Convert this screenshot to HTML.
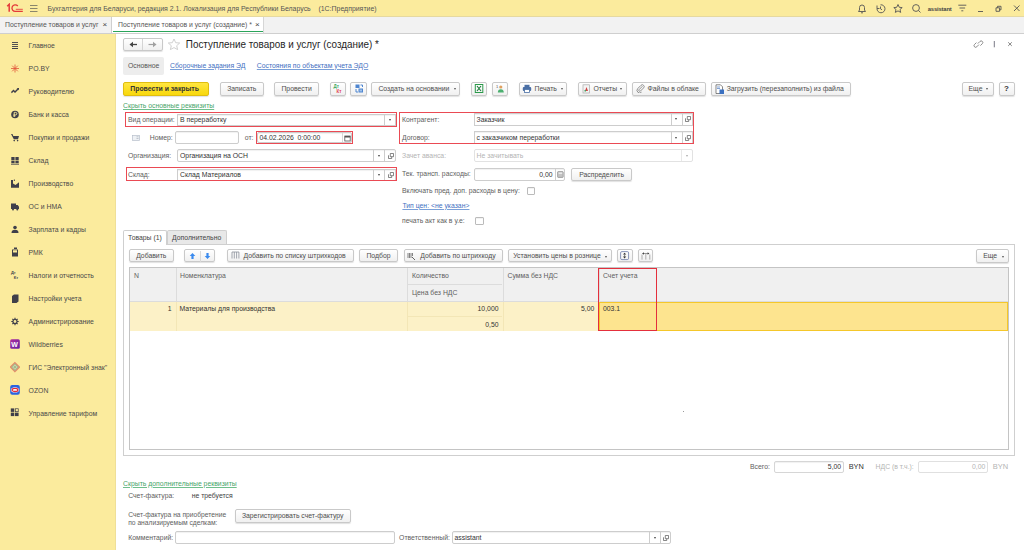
<!DOCTYPE html>
<html><head><meta charset="utf-8">
<style>
*{margin:0;padding:0;box-sizing:border-box}
html,body{width:1024px;height:550px;overflow:hidden;background:#fff}
body{font-family:"Liberation Sans",sans-serif;font-size:6.85px;color:#5e5e5e;position:relative}
.a{position:absolute;white-space:nowrap}
.t{position:absolute;white-space:nowrap;line-height:10px;height:10px}
.btn{position:absolute;border:1px solid #c9c9c9;border-radius:2px;background:linear-gradient(#fff,#f0f0f0);box-shadow:0 1px 1px rgba(0,0,0,.12);text-align:center;line-height:12px;color:#4d4d4d;white-space:nowrap}
.inp{position:absolute;border:1px solid #cdcdcd;border-radius:2px;background:#fff;box-shadow:inset 0 1px 1px rgba(0,0,0,.06)}
.red{position:absolute;border:1.8px solid #ea4a54}
.lnk{color:#3f6fbf;text-decoration:underline;text-decoration-thickness:0.6px;text-decoration-color:#7aa0d8}
.grn{color:#47a56a;text-decoration:underline;text-decoration-thickness:0.6px;text-decoration-color:#6fbf8c}
.dd{position:absolute;top:0;bottom:0;border-left:1px solid #cdcdcd}
.dd:after{content:"";position:absolute;left:3.5px;top:50%;margin-top:-1px;border-left:1.6px solid transparent;border-right:1.6px solid transparent;border-top:2px solid #444}
.lk{position:absolute;top:0;bottom:0;border-left:1px solid #cdcdcd}
.lk svg{position:absolute;left:2.5px;top:50%;margin-top:-3px}
.ddg:after{border-top-color:#aaa!important}
.arr{position:absolute;width:0;height:0;border-left:1.6px solid transparent;border-right:1.6px solid transparent;border-top:2px solid #555}
</style></head><body>

<!-- top bar -->
<div class="a" style="left:0;top:0;width:1024px;height:17px;background:#fbeb9d;border-bottom:1px solid #e6d9a0"></div>
<div class="a" style="left:0;top:17px;width:1024px;height:17px;background:#f2f2f2;border-bottom:1px solid #cfcfcf"></div>
<!-- sidebar -->
<div class="a" style="left:0;top:34px;width:116px;height:516px;background:#fbeb9d;border-right:1px solid #efdf98"></div>
<!-- top bar content -->
<svg class="a" style="left:6px;top:3px" width="19" height="11" viewBox="0 0 19 11">
<path d="M1.2 3.2 L3.2 1.3 V8.7" stroke="#e43a3a" stroke-width="1.5" fill="none"/>
<path d="M11.8 3 A3.3 3.3 0 1 0 9.5 8.4 H16.8" stroke="#e43a3a" stroke-width="1.3" fill="none"/>
<path d="M9.8 6.3 H16.8" stroke="#e8504a" stroke-width="1" fill="none"/>
</svg>
<svg class="a" style="left:30px;top:4px" width="8" height="9" viewBox="0 0 8 9"><path d="M0 1.5H7.5M0 4.5H7.5M0 7.5H7.5" stroke="#7d7a66" stroke-width="0.9"/></svg>
<div class="t" style="left:47.5px;top:3.5px;color:#555;font-size:6.95px">Бухгалтерия для Беларуси, редакция 2.1. Локализация для Республики Беларусь&nbsp;&nbsp;&nbsp; (1С:Предприятие)</div>
<!-- top right icons -->
<svg class="a" style="left:856px;top:3px" width="170" height="11" viewBox="0 0 170 11">
<g fill="none" stroke="#555" stroke-width="0.9">
<path d="M2.5 8.5 H9.5 L8.5 7 V4.5 A2.5 2.5 0 0 0 3.5 4.5 V7 Z M5 9.8 H7"/>
<path d="M21 5.5 A4 4 0 1 0 24.5 1.8 M21 2.5 V5.5 H23.5 M24.5 3.5 V5.8 L26 6.8"/>
<path d="M42 1.5 L43.3 4.3 L46.2 4.6 L44 6.5 L44.7 9.4 L42 7.9 L39.3 9.4 L40 6.5 L37.8 4.6 L40.7 4.3 Z"/>
<circle cx="60" cy="5" r="3.4"/><path d="M62.5 7.5 L64.5 9.5"/>
<path d="M102.3 2.2 H110.3 M103.5 5 H109.1 M105.3 7.8 H107.3" stroke="#555"/>
<path d="M122 8.5 H127"/>
<path d="M140 4.8 H143.6 V8.3 H140 Z M141.5 4.8 V3.3 H145 V6.8 H143.6"/>
<path d="M158 2.5 L163.5 8 M163.5 2.5 L158 8"/>
</g>
</svg>
<div class="t" style="left:927.8px;top:3.5px;color:#444;font-size:5.8px;font-weight:bold;letter-spacing:-0.15px">assistant</div>

<!-- tabs -->
<div class="t" style="left:5px;top:20px;color:#555">Поступление товаров и услуг</div>
<div class="t" style="left:102.5px;top:20px;color:#444;font-size:8px">×</div>
<div class="a" style="left:111px;top:17px;width:1px;height:16px;background:#cfcfcf"></div>
<div class="a" style="left:112px;top:17px;width:151px;height:16px;background:#fff"></div>
<div class="a" style="left:113px;top:30.8px;width:150px;height:1.3px;background:#2aa45a"></div>
<div class="a" style="left:263px;top:17px;width:1px;height:16px;background:#d6d6d6"></div>
<div class="t" style="left:118px;top:20px;color:#555">Поступление товаров и услуг (создание) *</div>
<div class="t" style="left:255px;top:20px;color:#444;font-size:8px">×</div>

<!-- sidebar items -->
<div class="t" style="color:#4a4a4a;left:28.6px;top:40.5px">Главное</div>
<div class="t" style="color:#4a4a4a;left:28.6px;top:63.5px">PO.BY</div>
<div class="t" style="color:#4a4a4a;left:28.6px;top:86.5px">Руководителю</div>
<div class="t" style="color:#4a4a4a;left:28.6px;top:109.5px">Банк и касса</div>
<div class="t" style="color:#4a4a4a;left:28.6px;top:132.5px">Покупки и продажи</div>
<div class="t" style="color:#4a4a4a;left:28.6px;top:155.5px">Склад</div>
<div class="t" style="color:#4a4a4a;left:28.6px;top:178.5px">Производство</div>
<div class="t" style="color:#4a4a4a;left:28.6px;top:201.5px">ОС и НМА</div>
<div class="t" style="color:#4a4a4a;left:28.6px;top:224.5px">Зарплата и кадры</div>
<div class="t" style="color:#4a4a4a;left:28.6px;top:247.5px">РМК</div>
<div class="t" style="color:#4a4a4a;left:28.6px;top:270.5px">Налоги и отчетность</div>
<div class="t" style="color:#4a4a4a;left:28.6px;top:293.5px">Настройки учета</div>
<div class="t" style="color:#4a4a4a;left:28.6px;top:316.5px">Администрирование</div>
<div class="t" style="color:#4a4a4a;left:28.6px;top:339.5px">Wildberries</div>
<div class="t" style="color:#4a4a4a;left:28.6px;top:362.5px">ГИС "Электронный знак"</div>
<div class="t" style="color:#4a4a4a;left:28.6px;top:385.5px">OZON</div>
<div class="t" style="color:#4a4a4a;left:28.6px;top:408.5px">Управление тарифом</div>
<!-- sidebar icons -->
<svg class="a" style="left:10px;top:40px" width="10" height="400" viewBox="0 0 10 400">
<g fill="#3f3f4a">
<!-- Главное y=45.5 -->
<rect x="2" y="2" width="6" height="0.9"/><rect x="2" y="4" width="6" height="0.9"/><rect x="2" y="6" width="6" height="0.9"/><rect x="2" y="8" width="6" height="1"/>
<!-- Руководителю y=91.5 -> 51.5 -->
<path d="M1 52 L3.5 49.5 L5 51 L7.5 48.5 L6.5 48 H9 V50.5 L8.5 49.5 L5 53 L3.5 51.5 L1.8 53.2 Z"/>
<!-- Банк y=114.5 -> 74.5 -->
<circle cx="5" cy="74.5" r="3.8"/>
<!-- Покупки 137.5 -> 97.5 -->
<path d="M1 94 H2.5 L3.3 96 H9 L8 99.2 H3.8 Z"/><circle cx="4.2" cy="100.6" r="0.8"/><circle cx="7.6" cy="100.6" r="0.8"/>
<!-- Склад 160.5 -> 120.5 -->
<rect x="1.3" y="117" width="3.3" height="3"/><rect x="5.4" y="117" width="3.3" height="3"/><rect x="1.3" y="120.6" width="3.3" height="2.6"/><rect x="5.4" y="120.6" width="3.3" height="2.6"/><rect x="1" y="123.8" width="8" height="0.8"/>
<!-- Производство 183.5 -> 143.5 -->
<path d="M1 147.8 V140 H3 V143.5 L5.5 145 L9 142.2 V147.8 Z"/><rect x="3.8" y="139.6" width="1.2" height="1.2"/>
<!-- ОС и НМА 206.5 -> 166.5 -->
<path d="M1 163.5 H6 V165 H7.7 L9 166.8 V169 H1 Z"/><circle cx="3" cy="169.4" r="1"/><circle cx="7.3" cy="169.4" r="1"/>
<!-- Зарплата 229.5 -> 189.5 -->
<circle cx="5" cy="187.5" r="1.8"/><path d="M1.5 193 Q1.5 189.8 5 189.8 Q8.5 189.8 8.5 193 Z"/>
<!-- РМК 252.5 -> 212.5 -->
<path d="M2 209.5 H8 V216.5 H2 Z M3 210.3 V212.5 H7 V210.3 Z" fill-rule="evenodd"/><rect x="4" y="207.5" width="3" height="1.5"/>
<!-- Настройки учета 298.5 -> 258.5 -->
<path d="M2 256 L4 254.5 H8.5 V261.5 L6.5 263 H2 Z"/>
<!-- Админ 321.5 -> 281.5 -->
<circle cx="5" cy="281.5" r="2.6"/>
<!-- Управление тарифом 413.5 -> 373.5 -->
<rect x="0.8" y="368.4" width="3.5" height="3.5"/><rect x="0.8" y="372.6" width="3.5" height="3.5"/><rect x="5" y="372.6" width="3.6" height="3.5"/><rect x="5.35" y="368.75" width="2.9" height="2.9" fill="none" stroke="#3f3f4a" stroke-width="0.7"/>
</g>
<path d="M4.2 77 V72.4 H5.6 A1.25 1.25 0 0 1 5.6 74.9 H3.4 M3.4 75.9 H5.4" fill="none" stroke="#fbeb9d" stroke-width="0.9"/>
<g stroke="#3f3f4a" stroke-width="1.2"><path d="M5 277.8 V285.2 M1.3 281.5 H8.7 M2.4 278.9 L7.6 284.1 M7.6 278.9 L2.4 284.1"/></g>
<circle cx="5" cy="281.5" r="1.4" fill="#fbeb9d"/>
<!-- PO.BY red asterisk 68.5 -> 28.5 -->
<g stroke="#e2553a" stroke-width="0.8"><path d="M5 24.5 V32.5 M1 28.5 H9 M2.2 25.7 L7.8 31.3 M7.8 25.7 L2.2 31.3"/></g>
<!-- Налоги 275.5 -> 235.5 -->
<text x="1" y="234.3" font-size="4" font-weight="bold" font-family="Liberation Sans" fill="#3f3f4a">Дт</text><text x="3.8" y="238.6" font-size="4" font-weight="bold" font-family="Liberation Sans" fill="#3f3f4a">Кт</text>
<!-- Wildberries 344.5 -> 304.5 -->
<defs><linearGradient id="wbg" x1="0" y1="0" x2="1" y2="1"><stop offset="0" stop-color="#b02c9c"/><stop offset="1" stop-color="#5f1fa8"/></linearGradient></defs><rect x="0.2" y="299.2" width="9.6" height="9.5" rx="1.5" fill="url(#wbg)"/><text x="1.2" y="306.8" font-size="7" font-weight="bold" font-family="Liberation Sans" fill="#fff">W</text>
<!-- ГИС 367.5 -> 327.5 -->
<path d="M4.9 321.7 L10.3 327.1 L4.9 332.5 L-0.5 327.1 Z" fill="#e48a6a"/><path d="M4.9 323.2 L8.8 327.1 L4.9 331 L1 327.1 Z" fill="#a9bb8a"/><path d="M4.9 325 L7 327.1 L4.9 329.2 L2.8 327.1 Z" fill="none" stroke="#dfe6c8" stroke-width="0.6"/>
<!-- OZON 390.5 -> 350.5 -->
<rect x="0.2" y="345" width="9.6" height="9.7" rx="2" fill="#2a63e0"/><ellipse cx="5" cy="349.9" rx="3.9" ry="2.6" fill="#fff"/><ellipse cx="5" cy="349.9" rx="2.9" ry="1.6" fill="#fff" stroke="#e02a3a" stroke-width="1.3"/>
</svg>
<!-- form header -->
<div class="btn" style="left:122.8px;top:38.3px;width:40px;height:13px;line-height:11px"></div>
<div class="a" style="left:142px;top:39px;width:1px;height:11px;background:#d4d4d4"></div>
<svg class="a" style="left:128px;top:40px" width="30" height="9" viewBox="0 0 30 9">
<path d="M4 4.5 H9" stroke="#444" stroke-width="1.3"/><path d="M1.5 4.5 L5 1.8 V7.2 Z" fill="#444"/>
<path d="M20.5 4.5 H25.5" stroke="#a0a0a0" stroke-width="1.2"/><path d="M28.5 4.5 L25 1.8 V7.2 Z" fill="#a0a0a0"/>
</svg>
<svg class="a" style="left:167px;top:38px" width="14" height="13" viewBox="0 0 14 13">
<path d="M7 1 L8.7 4.7 L12.7 5 L9.7 7.7 L10.6 11.6 L7 9.6 L3.4 11.6 L4.3 7.7 L1.3 5 L5.3 4.7 Z" fill="none" stroke="#c4c4c4" stroke-width="0.8"/>
</svg>
<div class="t" style="left:185.8px;top:38.5px;height:12px;line-height:12px;font-size:9.9px;color:#1e1e1e;transform:scaleY(1.08);transform-origin:0 70%">Поступление товаров и услуг (создание) *</div>
<svg class="a" style="left:972px;top:38px" width="45" height="12" viewBox="0 0 45 12">
<g fill="none" stroke="#707070" stroke-width="0.8">
<path d="M5.8 5.6 L8 3.4 A1.6 1.6 0 0 1 10.3 5.7 L8.4 7.6"/>
<path d="M6.9 6.6 L4.8 8.8 A1.6 1.6 0 0 1 2.5 6.5 L4.4 4.6"/>
<path d="M36.2 4.3 L39.8 7.9 M39.8 4.3 L36.2 7.9" stroke="#666"/>
</g>
<path d="M22.3 3 V9.3" stroke="#6a6a78" stroke-width="0.9"/>
</svg>

<!-- form tabs -->
<div class="a" style="left:123px;top:57px;width:41px;height:17.5px;background:#ededed;border-radius:2px"></div>
<div class="t" style="left:128px;top:60.5px;color:#555">Основное</div>
<div class="t lnk" style="left:170px;top:60.5px">Сборочные задания ЭД</div>
<div class="t lnk" style="left:256.8px;top:60.5px">Состояния по объектам учета ЭДО</div>

<!-- command bar -->
<div class="btn" style="left:123px;top:81.7px;width:86px;height:14px;background:linear-gradient(#ffe640,#f8d80c);border-color:#e0be10;color:#333;font-weight:bold"></div>
<div class="t" style="left:130.3px;top:83.5px;font-weight:bold;color:#333;letter-spacing:0px">Провести и закрыть</div>
<div class="btn" style="left:219.5px;top:81.7px;width:44.5px;height:14px">Записать</div>
<div class="btn" style="left:274.2px;top:81.7px;width:44.8px;height:14px">Провести</div>
<div class="btn" style="left:329.7px;top:81.7px;width:16px;height:14px"></div>
<svg class="a" style="left:331px;top:83px" width="14" height="11" viewBox="0 0 14 11"><text x="2.5" y="5" font-size="4.5" font-weight="bold" font-family="Liberation Sans" fill="#3aa860">Дт</text><text x="5.5" y="9.5" font-size="4.5" font-weight="bold" font-family="Liberation Sans" fill="#e04050">Кт</text></svg>
<div class="btn" style="left:350.4px;top:81.7px;width:16.4px;height:14px"></div>
<svg class="a" style="left:352px;top:83px" width="14" height="11" viewBox="0 0 14 11"><g fill="none" stroke="#4f86d0" stroke-width="1"><rect x="4" y="2" width="3" height="2.5" fill="#4f86d0"/><path d="M8.5 2 H10.5 V4 M4 6 V9 H6"/><rect x="7" y="6" width="3.5" height="3" fill="#9ec0ea"/></g></svg>
<div class="btn" style="left:371.4px;top:81.7px;width:89px;height:14px"><span style="margin-left:-4px">Создать на основании</span></div>
<div class="btn" style="left:471px;top:81.7px;width:16px;height:14px"></div>
<svg class="a" style="left:473px;top:83px" width="12" height="11" viewBox="0 0 12 11"><rect x="2.3" y="1.5" width="7.5" height="8" fill="none" stroke="#2b9a4a" stroke-width="1"/><path d="M4 3 L8 8 M8 3 L4 8" stroke="#1c7a3a" stroke-width="1.1"/></svg>
<div class="btn" style="left:492.2px;top:81.7px;width:15.5px;height:14px"></div>
<svg class="a" style="left:494px;top:83px" width="12" height="11" viewBox="0 0 12 11"><circle cx="6.8" cy="4" r="1.6" fill="#e0a060"/><path d="M3.8 9.5 Q4 6.2 6.8 6.2 Q9.6 6.2 9.8 9.5 Z" fill="#4cb070"/><text x="2" y="4.5" font-size="4" font-family="Liberation Sans" fill="#555">1</text></svg>
<div class="btn" style="left:518.6px;top:81.7px;width:48.2px;height:14px"><span style="margin-left:6px">Печать</span></div>
<svg class="a" style="left:521.5px;top:84px" width="10" height="9" viewBox="0 0 10 9"><rect x="2.5" y="0.8" width="5" height="2.5" fill="#4a6fa5"/><rect x="0.8" y="3" width="8.4" height="4" rx="1" fill="#4a6fa5"/><rect x="2.5" y="5.5" width="5" height="3" fill="#fff" stroke="#4a6fa5" stroke-width="0.8"/></svg>
<div class="btn" style="left:578px;top:81.7px;width:48.6px;height:14px"><span style="margin-left:6px">Отчеты</span></div>
<svg class="a" style="left:582px;top:83.5px" width="9" height="10" viewBox="0 0 9 10"><rect x="1" y="0.8" width="6.5" height="8.2" fill="#f4f4f4" stroke="#aaa" stroke-width="0.7"/><path d="M3 7 L4.5 3 L6 7 Z" fill="#d04040"/><rect x="2.5" y="6" width="1.5" height="1.5" fill="#40a060"/></svg>
<div class="btn" style="left:632.2px;top:81.7px;width:74px;height:14px"><span style="margin-left:8px">Файлы в облаке</span></div>
<svg class="a" style="left:636px;top:84px" width="9" height="9" viewBox="0 0 9 9"><path d="M6.5 2.2 L3 5.7 A1 1 0 0 0 4.4 7.1 L7.6 3.9 A1.8 1.8 0 0 0 5 1.3 L1.8 4.5 A2.6 2.6 0 0 0 5.5 8.2" fill="none" stroke="#777" stroke-width="0.8"/></svg>
<div class="btn" style="left:711.3px;top:81.7px;width:139.8px;height:14px"><span style="margin-left:8px">Загрузить (перезаполнить) из файла</span></div>
<svg class="a" style="left:714.5px;top:83.5px" width="10" height="11" viewBox="0 0 10 11"><path d="M1 0.8 H5.5 L7.5 2.8 V9.5 H1 Z" fill="#fff" stroke="#555" stroke-width="0.7"/><path d="M2 3 H5 M2 4.5 H5" stroke="#4a7ac0" stroke-width="0.7"/><rect x="4.5" y="5.5" width="4.5" height="4.5" fill="#3a70c0"/></svg>
<div class="btn" style="left:961.5px;top:81.7px;width:32px;height:14px"><span style="margin-left:-4px">Еще</span></div>
<div class="btn" style="left:998.5px;top:81.7px;width:16px;height:14px;font-weight:bold;color:#333;font-size:8px">?</div>
<!-- dropdown arrows on buttons -->
<div class="arr" style="left:453.5px;top:88px"></div>
<div class="arr" style="left:560.5px;top:88px"></div>
<div class="arr" style="left:620px;top:88px"></div>
<div class="arr" style="left:986px;top:88px"></div>

<div class="t grn" style="left:123px;top:101px">Скрыть основные реквизиты</div>

<!-- left fields -->
<div class="t" style="left:128px;top:114.5px">Вид операции:</div>
<div class="inp" style="left:176.8px;top:113.5px;width:219.7px;height:12px;border-radius:0"><div class="dd" style="left:206.6px;width:11px"></div></div>
<div class="t" style="left:180px;top:114.5px;color:#333">В переработку</div>
<div class="red" style="left:125px;top:112.3px;width:272px;height:14.5px"></div>

<svg class="a" style="left:131.8px;top:134.8px" width="8" height="6" viewBox="0 0 8 6"><rect x="0.4" y="0.4" width="7.2" height="5.2" fill="#eef1f5" stroke="#b8c0cc" stroke-width="0.7"/><path d="M4.5 1.8 H6.5 M4.5 3.5 H6.5" stroke="#a0a8b4" stroke-width="0.6"/></svg>
<div class="t" style="left:149.8px;top:132.5px">Номер:</div>
<div class="inp" style="left:175.4px;top:131.2px;width:64px;height:12.5px"></div>
<div class="t" style="left:244.8px;top:132.5px">от:</div>
<div class="inp" style="left:257px;top:132px;width:95px;height:11px"><div class="a" style="left:84px;top:0;bottom:0;border-left:1px solid #d8d8d8;width:10px"></div></div>
<div class="t" style="left:259.5px;top:132.5px;color:#333">04.02.2026&nbsp; 0:00:00</div>
<svg class="a" style="left:343.5px;top:134.5px" width="7" height="7" viewBox="0 0 7 7"><rect x="0.8" y="1" width="5.4" height="5" fill="none" stroke="#555" stroke-width="0.8"/><rect x="0.8" y="1" width="5.4" height="1.5" fill="#555"/></svg>
<div class="red" style="left:256.2px;top:131px;width:96.5px;height:13.3px"></div>

<div class="t" style="left:128px;top:150.5px">Организация:</div>
<div class="inp" style="left:176.8px;top:149.3px;width:219.4px;height:13px"><div class="dd" style="left:195.6px;width:11px"></div><div class="lk" style="left:206.6px;width:11px"><svg width="6" height="6" viewBox="0 0 6 6"><path d="M2.3 0.5 H5.5 V3.7 H2.3 Z M0.5 2.3 V5.5 H3.7 V3.7" fill="none" stroke="#555" stroke-width="0.7"/></svg></div></div>
<div class="t" style="left:180px;top:150.5px;color:#333">Организация на ОСН</div>

<div class="t" style="left:128px;top:169.5px">Склад:</div>
<div class="inp" style="left:176.8px;top:168.5px;width:219.7px;height:12px;border-radius:0"><div class="dd" style="left:195.6px;width:11px"></div><div class="lk" style="left:206.6px;width:11px"><svg width="6" height="6" viewBox="0 0 6 6"><path d="M2.3 0.5 H5.5 V3.7 H2.3 Z M0.5 2.3 V5.5 H3.7 V3.7" fill="none" stroke="#555" stroke-width="0.7"/></svg></div></div>
<div class="t" style="left:180px;top:169.5px;color:#333">Склад Материалов</div>
<div class="red" style="left:125.8px;top:167.4px;width:271.4px;height:13.5px"></div>

<!-- right fields -->
<div class="t" style="left:402px;top:115px">Контрагент:</div>
<div class="inp" style="left:474px;top:113px;width:218.5px;height:12.6px;border-radius:0"><div class="dd" style="left:195.5px;width:11px"></div><div class="lk" style="left:206.5px;width:11px"><svg width="6" height="6" viewBox="0 0 6 6"><path d="M2.3 0.5 H5.5 V3.7 H2.3 Z M0.5 2.3 V5.5 H3.7 V3.7" fill="none" stroke="#555" stroke-width="0.7"/></svg></div></div>
<div class="t" style="left:476.5px;top:115px;color:#333">Заказчик</div>
<div class="t" style="left:402px;top:132.5px">Договор:</div>
<div class="inp" style="left:474px;top:131px;width:218.5px;height:13px;border-radius:0"><div class="dd" style="left:195.5px;width:11px"></div><div class="lk" style="left:206.5px;width:11px"><svg width="6" height="6" viewBox="0 0 6 6"><path d="M2.3 0.5 H5.5 V3.7 H2.3 Z M0.5 2.3 V5.5 H3.7 V3.7" fill="none" stroke="#555" stroke-width="0.7"/></svg></div></div>
<div class="t" style="left:476.5px;top:132.5px;color:#333">с заказчиком переработки</div>
<div class="red" style="left:398.6px;top:112.3px;width:295.2px;height:31.8px"></div>

<div class="t" style="left:402px;top:150.5px;color:#b4b4b4">Зачет аванса:</div>
<div class="inp" style="left:474px;top:149.4px;width:219px;height:12.8px;border-color:#e2e2e2;box-shadow:none"><div class="dd ddg" style="left:206.4px;width:11px;border-color:#e8e8e8"></div></div>
<div class="t" style="left:476.5px;top:150.5px;color:#b4b4b4">Не зачитывать</div>

<div class="t" style="left:402px;top:169.3px">Тек. трансп. расходы:</div>
<div class="inp" style="left:474px;top:167.9px;width:91.3px;height:12.8px"><div class="a" style="left:79.8px;top:0;bottom:0;border-left:1px solid #d0d0d0;width:10px"></div></div>
<div class="t" style="left:474px;top:169.6px;width:78.5px;text-align:right;color:#333">0,00</div>
<svg class="a" style="left:556.8px;top:170.6px" width="7" height="7" viewBox="0 0 7 7"><rect x="0.6" y="0.6" width="5.6" height="5.8" rx="0.6" fill="#c4c4c4" stroke="#8a8a8a" stroke-width="0.7"/><rect x="1.6" y="1.5" width="3.6" height="1.3" fill="#f0f0f0"/></svg>
<div class="btn" style="left:571.3px;top:167.6px;width:60.5px;height:13.5px;line-height:11.5px">Распределить</div>

<div class="t" style="left:402px;top:186.4px">Включать пред. доп. расходы в цену:</div>
<div class="inp" style="left:526.7px;top:187px;width:8.3px;height:8.3px;border-color:#bbb;border-radius:1px"></div>
<div class="t lnk" style="left:402.4px;top:200.7px">Тип цен: &lt;не указан&gt;</div>
<div class="t" style="left:402px;top:215.6px">печать акт как в у.е:</div>
<div class="inp" style="left:475.4px;top:216.5px;width:8.3px;height:8.3px;border-color:#bbb;border-radius:1px"></div>
<!-- tabs panel -->
<div class="a" style="left:123px;top:244px;width:891.5px;height:211.5px;border:1px solid #cfcfcf"></div>
<div class="a" style="left:166.7px;top:230.3px;width:60.5px;height:14px;background:#e8e8e8;border:1px solid #cfcfcf;border-bottom:none;border-radius:2px 2px 0 0"></div>
<div class="a" style="left:123.3px;top:230.3px;width:43.8px;height:14.7px;background:#fff;border:1px solid #cfcfcf;border-bottom:none;border-radius:2px 2px 0 0"></div>
<div class="t" style="left:128px;top:232.5px;color:#444">Товары (1)</div>
<div class="t" style="left:172px;top:232.5px;color:#444">Дополнительно</div>

<!-- toolbar -->
<div class="btn" style="left:129px;top:249.2px;width:44.5px;height:13px;line-height:11px">Добавить</div>
<div class="btn" style="left:184.4px;top:249.2px;width:31px;height:13px"></div>
<div class="a" style="left:200.3px;top:250.5px;width:1px;height:11px;background:#d8d8d8"></div>
<svg class="a" style="left:187px;top:251px" width="26" height="10" viewBox="0 0 26 10"><path d="M5.5 2 L8.3 5 H6.6 V8 H4.4 V5 H2.7 Z" fill="#3a8aee"/><path d="M20.5 8 L23.3 5 H21.6 V2 H19.4 V5 H17.7 Z" fill="#3a8aee"/></svg>
<div class="btn" style="left:227.1px;top:249.2px;width:127px;height:13px;line-height:11px"><span style="margin-left:8px">Добавить по списку штрихкодов</span></div>
<svg class="a" style="left:230.5px;top:251px" width="9" height="9" viewBox="0 0 9 9"><path d="M1 1 H8 M1 1 V7.5 M3.3 1 V7.5 M5.6 1 V7.5 M7.9 1 V7.5" stroke="#8a8f9a" stroke-width="0.8" fill="none"/></svg>
<div class="btn" style="left:359.3px;top:249.2px;width:38.3px;height:13px;line-height:11px">Подбор</div>
<div class="btn" style="left:403.5px;top:249.2px;width:99px;height:13px;line-height:11px"><span style="margin-left:10px">Добавить по штрихкоду</span></div>
<svg class="a" style="left:406.5px;top:251.5px" width="9" height="9" viewBox="0 0 9 9"><path d="M1 1 V6 M2.5 1 V6 M4 1 V6 M5.5 1 V4" stroke="#666" stroke-width="0.8"/><path d="M5 5 L8 8" stroke="#666" stroke-width="1"/></svg>
<div class="btn" style="left:507.8px;top:249.2px;width:104.3px;height:13px;line-height:11px"><span style="margin-left:-6px">Установить цены в рознице</span></div>
<div class="arr" style="left:605px;top:255.5px"></div>
<div class="btn" style="left:616.8px;top:249.2px;width:16.2px;height:13px"></div>
<svg class="a" style="left:620px;top:251px" width="10" height="10" viewBox="0 0 10 10"><rect x="0.6" y="0.6" width="8" height="8" rx="1.3" fill="none" stroke="#6a78a8" stroke-width="0.8"/><path d="M4.6 1.8 L3 3.6 H6.2 Z M4.6 7.4 L3 5.6 H6.2 Z" fill="#333"/><path d="M4.6 3.5 V5.7" stroke="#333" stroke-width="0.6"/></svg>
<div class="btn" style="left:637.8px;top:249.2px;width:15.7px;height:13px"></div>
<svg class="a" style="left:640.5px;top:251px" width="10" height="10" viewBox="0 0 10 10"><path d="M1 3.5 V8.6 M4.8 3 V8.6 M8.8 3.5 V8.6" stroke="#9a9a9a" stroke-width="0.8"/><path d="M1.5 2.5 H8" stroke="#555" stroke-width="0.6"/><path d="M1.2 2.5 L3 1.2 V3.8 Z M8.4 2.5 L6.6 1.2 V3.8 Z" fill="#444"/></svg>
<div class="btn" style="left:976.3px;top:249px;width:32.8px;height:14px;line-height:12px"><span style="margin-left:-5px">Еще</span></div>
<div class="arr" style="left:1001.5px;top:255.5px"></div>

<!-- table -->
<div class="a" style="left:128.6px;top:267.3px;width:880px;height:182.3px;border:1px solid #c4c4c4;background:#fff"></div>
<div class="a" style="left:130px;top:268.3px;width:877.5px;height:33px;background:#f0f0f0"></div>
<div class="a" style="left:175.5px;top:268.3px;width:1px;height:63px;background:#dcdcdc"></div>
<div class="a" style="left:407.3px;top:268.3px;width:1px;height:63px;background:#dcdcdc"></div>
<div class="a" style="left:502.5px;top:268.3px;width:1px;height:63px;background:#dcdcdc"></div>
<div class="a" style="left:598.7px;top:268.3px;width:1px;height:33px;background:#dcdcdc"></div>
<div class="a" style="left:407.3px;top:283.8px;width:95px;height:1px;background:#dcdcdc"></div>
<div class="a" style="left:130px;top:301px;width:877.5px;height:1px;background:#dcdcdc"></div>
<div class="t" style="left:134px;top:270.5px">N</div>
<div class="t" style="left:180px;top:270.5px">Номенклатура</div>
<div class="t" style="left:412px;top:270.5px">Количество</div>
<div class="t" style="left:412px;top:288px">Цена без НДС</div>
<div class="t" style="left:507.5px;top:270.5px">Сумма без НДС</div>
<div class="t" style="left:603px;top:270.5px">Счет учета</div>
<!-- row -->
<div class="a" style="left:130px;top:301.5px;width:469px;height:29.5px;background:#fcf1c7"></div>
<div class="a" style="left:175.5px;top:301.5px;width:1px;height:29.5px;background:#f3e6b6"></div>
<div class="a" style="left:407.3px;top:301.5px;width:1px;height:29.5px;background:#f3e6b6"></div>
<div class="a" style="left:502.5px;top:301.5px;width:1px;height:29.5px;background:#f3e6b6"></div>
<div class="a" style="left:407.3px;top:316px;width:95px;height:1px;background:#f3e6b6"></div>
<div class="a" style="left:598.7px;top:301.8px;width:409.5px;height:29.4px;background:#fde48f;border:1px solid #f5c72a"></div>
<div class="t" style="left:134px;top:303.8px;width:37.5px;text-align:right;color:#333">1</div>
<div class="t" style="left:179.5px;top:303.8px;color:#333">Материалы для производства</div>
<div class="t" style="left:408px;top:303.8px;width:90.5px;text-align:right;color:#333">10,000</div>
<div class="t" style="left:408px;top:319.8px;width:90.5px;text-align:right;color:#333">0,50</div>
<div class="t" style="left:503px;top:303.8px;width:91.3px;text-align:right;color:#333">5,00</div>
<div class="t" style="left:603px;top:303.8px;color:#333">003.1</div>
<div class="red" style="left:598.3px;top:268px;width:59px;height:63.3px;border-width:1.8px;border-color:#e42f3c"></div>
<div class="a" style="left:683px;top:411px;width:1px;height:1px;background:#999"></div>

<!-- totals -->
<div class="t" style="left:750px;top:462px">Всего:</div>
<div class="inp" style="left:773.7px;top:460.6px;width:70.3px;height:12.6px;border-color:#d6d6d6"></div>
<div class="t" style="left:773.7px;top:462px;width:67.5px;text-align:right;color:#333">5,00</div>
<div class="t" style="left:848.7px;top:462px;color:#333;font-size:7.4px">BYN</div>
<div class="t" style="left:875.6px;top:462px;color:#b4b4b4">НДС (в т.ч.):</div>
<div class="inp" style="left:918.4px;top:460.6px;width:69.6px;height:12.6px;border-color:#e0e0e0;box-shadow:none"></div>
<div class="t" style="left:918.4px;top:462px;width:67px;text-align:right;color:#b4b4b4">0,00</div>
<div class="t" style="left:992.7px;top:462px;color:#b4b4b4;font-size:7.5px">BYN</div>

<!-- footer -->
<div class="t grn" style="left:123px;top:478.6px">Скрыть дополнительные реквизиты</div>
<div class="t" style="left:128.2px;top:490.8px">Счет-фактура:</div>
<div class="t" style="left:191.7px;top:490.8px;color:#3e3e3e">не требуется</div>
<div class="t" style="left:128.2px;top:509.5px;font-size:6.7px">Счет-фактура на приобретение</div>
<div class="t" style="left:128.2px;top:518px;font-size:6.7px">по анализируемым сделкам:</div>
<div class="btn" style="left:234.7px;top:509.3px;width:116px;height:14.2px;line-height:12px">Зарегистрировать счет-фактуру</div>
<div class="t" style="left:128.2px;top:533.3px">Комментарий:</div>
<div class="inp" style="left:175.1px;top:531.4px;width:219.5px;height:12.7px"></div>
<div class="t" style="left:399.1px;top:532.7px">Ответственный:</div>
<div class="inp" style="left:452px;top:530.8px;width:219px;height:13.6px"><div class="dd" style="left:196px;width:10.6px"></div><div class="lk" style="left:206.6px;width:11px"><svg width="6" height="6" viewBox="0 0 6 6"><path d="M2.3 0.5 H5.5 V3.7 H2.3 Z M0.5 2.3 V5.5 H3.7 V3.7" fill="none" stroke="#555" stroke-width="0.7"/></svg></div></div>
<div class="t" style="left:454.5px;top:532.7px;color:#333">assistant</div>
</body></html>
